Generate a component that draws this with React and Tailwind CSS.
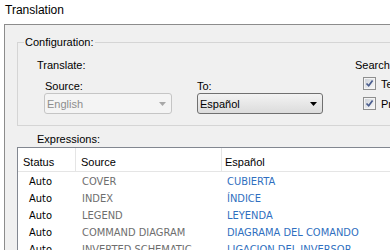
import React from 'react';

const rows = [
  ['Auto', 'COVER', 'CUBIERTA'],
  ['Auto', 'INDEX', 'ÍNDICE'],
  ['Auto', 'LEGEND', 'LEYENDA'],
  ['Auto', 'COMMAND DIAGRAM', 'DIAGRAMA DEL COMANDO'],
  ['Auto', 'INVERTED SCHEMATIC', 'LIGACION DEL INVERSOR'],
];

const Combo = ({ value, disabled = false }) => (
  <div
    className={`h-[21px] flex items-center justify-between rounded-[3px] border pl-[2px] pr-[5px] ${
      disabled
        ? 'border-[#c5c5c5] bg-[#f4f4f4] text-[#8d8d8d]'
        : 'border-[#707070] bg-gradient-to-b from-[#f3f3f3] to-[#dcdcdc] text-black'
    }`}
  >
    <span className="leading-[14px]">{value}</span>
    <svg width="7" height="4" viewBox="0 0 7 4">
      <path d="M0 0H7L3.5 4Z" fill={disabled ? '#a8a8a8' : '#000'} />
    </svg>
  </div>
);

const Check = ({ label }) => (
  <div className="flex items-center gap-[5px] h-[13px]">
    <span className="w-[13px] h-[13px] shrink-0 border border-[#8e8f8f] bg-[#f4f4f4] p-[1px]">
      <span className="block w-full h-full bg-gradient-to-br from-[#cfd3d9] to-[#f7f7f7]">
        <svg width="9" height="9" viewBox="0 0 9 9">
          <path d="M1.5 4.5L3.7 6.8L7.6 1.6" fill="none" stroke="#4a5d8e" strokeWidth="1.7" />
        </svg>
      </span>
    </span>
    <span className="leading-[14px] whitespace-nowrap">{label}</span>
  </div>
);

export default function App() {
  return (
    <div className="w-[390px] h-[250px] overflow-hidden bg-white flex flex-col text-black text-[11px] font-['Liberation_Sans',Arial,sans-serif]">
      {/* Title */}
      <div className="h-[24px] shrink-0 pl-[5px] pt-[3px] text-[12px] leading-[14px]">Translation</div>

      {/* Panel */}
      <div className="ml-[4px] flex-1 w-[420px] border-l border-t border-[#8c8c8c] bg-[#f0f0f0] pl-[12px] pt-[17px]">
        {/* Configuration group */}
        <div className="relative h-[84px] border border-[#d5d5d5]">
          <span className="absolute left-[6px] top-[-8px] px-[1px] bg-[#f0f0f0] leading-[14px]">Configuration:</span>
          <div className="flex">
            <div className="w-[337px] shrink-0 pl-[19px] pt-[15px]">
              <div className="leading-[14px]">Translate:</div>
              <div className="flex mt-[7px] pl-[7px]">
                <div className="w-[128px]">
                  <div className="pl-[1px] leading-[14px]">Source:</div>
                  <Combo value="English" disabled />
                </div>
                <div className="ml-[25px] w-[126px]">
                  <div className="leading-[14px]">To:</div>
                  <Combo value="Español" />
                </div>
              </div>
            </div>
            <div className="pt-[15px]">
              <div className="leading-[14px]">Search</div>
              <div className="pl-[8px] mt-[5px] flex flex-col gap-[7px]">
                <Check label="Text" />
                <Check label="Properties" />
              </div>
            </div>
          </div>
        </div>

        {/* Expressions */}
        <div className="mt-[6px] pl-[20px] leading-[14px]">Expressions:</div>
        <div className="mt-[1px] w-[400px] h-[120px] border-l border-t border-[#828790] bg-white">
          <div className="h-[24px] flex border-b border-[#e5e5e5]">
            <div className="w-[58px] border-r border-[#e5e5e5] pl-[5px] pt-[7px] leading-[14px]">Status</div>
            <div className="w-[146px] border-r border-[#e5e5e5] pl-[5px] pt-[7px] leading-[14px]">Source</div>
            <div className="pl-[3px] pt-[7px] leading-[14px]">Español</div>
          </div>
          <div className="pt-[1px] font-['DejaVu_Sans_Condensed','Liberation_Sans',sans-serif]">
            {rows.map(([status, src, dst]) => (
              <div key={src} className="h-[17px] flex leading-[17px] whitespace-nowrap">
                <div className="w-[58px] pl-[11px]">{status}</div>
                <div className="w-[146px] pl-[6px] text-[#6e6e6e]">{src}</div>
                <div className="pl-[5px] text-[#2f6fc0]">{dst}</div>
              </div>
            ))}
          </div>
        </div>
      </div>
    </div>
  );
}
